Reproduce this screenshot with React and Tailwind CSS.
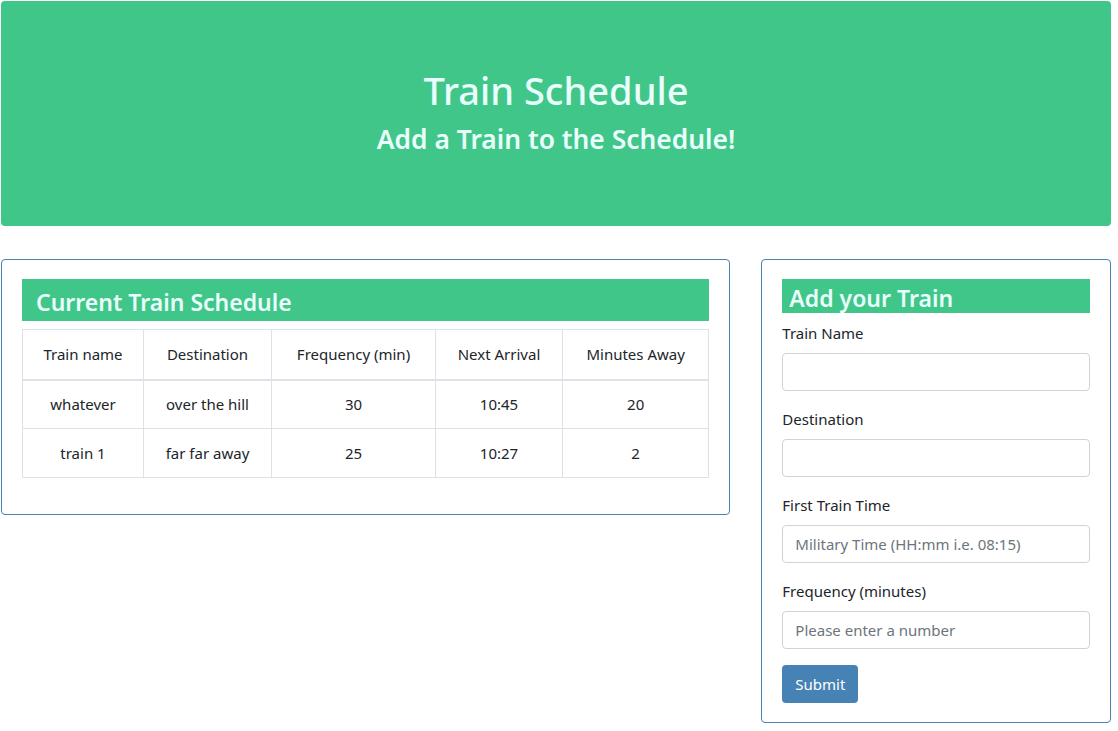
export default function App() {
  const rows = [
    ["whatever", "over the hill", "30", "10:45", "20"],
    ["train 1", "far far away", "25", "10:27", "2"],
  ];
  const font = { fontFamily: '"Noto Sans", "Open Sans", sans-serif' };
  return (
    <div className="w-[1110px] ml-[1px] pt-[1px] text-[#212529]" style={font}>
      <div className="h-[225px] rounded-[4px] bg-[#41c68a] flex flex-col items-center justify-center text-[#e8fffb]">
        <h1 className="text-[38px] leading-[46px] font-medium mb-[9px]">Train Schedule</h1>
        <h3 className="text-[26.4px] leading-[34px] font-semibold mb-[5px]">Add a Train to the Schedule!</h3>
      </div>
      <div className="flex gap-[31px] mt-[33px] items-start">
        <div className="w-[730px] border border-[#4682b4] rounded-[4px] px-[20px] pt-[19px] pb-[36px]">
          <h2 className="bg-[#41c68a] text-[#e8fffb] h-[42px] pl-[14px] text-[23px] font-semibold leading-[46px]">Current Train Schedule</h2>
          <table className="w-full mt-[8px] border-collapse text-[15px] text-center">
            <thead>
              <tr className="h-[50px]">
                {["Train name", "Destination", "Frequency (min)", "Next Arrival", "Minutes Away"].map((h, i) => (
                  <th key={i} className={"font-normal border border-[#dee2e6] border-b-2 " + ["w-[121px]", "w-[128px]", "w-[164px]", "w-[127px]", ""][i]}>{h}</th>
                ))}
              </tr>
            </thead>
            <tbody>
              {rows.map((r, i) => (
                <tr key={i} className="h-[49px]">
                  {r.map((c, j) => (
                    <td key={j} className="border border-[#dee2e6]">{c}</td>
                  ))}
                </tr>
              ))}
            </tbody>
          </table>
        </div>
        <div className="w-[350px] border border-[#4682b4] rounded-[4px] px-[20px] pt-[19px] pb-[19px]">
          <h2 className="bg-[#41c68a] text-[#e8fffb] h-[34px] pl-[7px] text-[23px] font-semibold leading-[38px]">Add your Train</h2>
          <form className="mt-[8px]" onSubmit={(e) => e.preventDefault()}>
            {[
              ["Train Name", ""],
              ["Destination", ""],
              ["First Train Time", "Military Time (HH:mm i.e. 08:15)"],
              ["Frequency (minutes)", "Please enter a number"],
            ].map(([l, p], i) => (
              <div key={i} className="mb-[16px]">
                <label className="block text-[15px] leading-[24px] mb-[8px]">{l}</label>
                <input
                  placeholder={p}
                  className="block w-full h-[38px] border border-[#ced4da] rounded-[4px] px-[12px] text-[15px] placeholder:text-[#6c757d] outline-none"
                />
              </div>
            ))}
            <button className="h-[38px] w-[76px] rounded-[4px] bg-[#4682b4] text-white text-[15px]">Submit</button>
          </form>
        </div>
      </div>
    </div>
  );
}
